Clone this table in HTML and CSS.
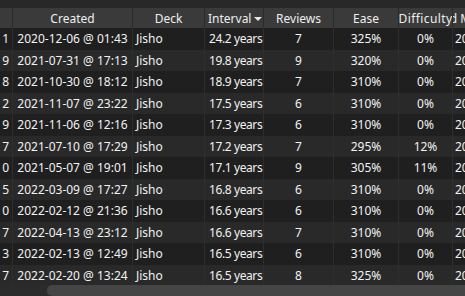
FILE: index.html
```html
<!DOCTYPE html>
<html>
<head>
<meta charset="utf-8">
<link rel="stylesheet" href="styles.css">
</head>
<body>
<div class="view">
  <div class="topstrip"></div>
  <div class="row head">
    <div class="c hc"></div>
    <div class="c hc"><span>Created</span></div>
    <div class="c hc"><span>Deck</span></div>
    <div class="c hc left"><span>Interval</span><i class="arrow"></i></div>
    <div class="c hc"><span>Reviews</span></div>
    <div class="c hc"><span>Ease</span></div>
    <div class="c hc"><span class="wide">Difficulty</span></div>
    <div class="c hc last"><span>Card Modified</span></div>
  </div>
  <div class="body" id="body"></div>
  <div class="hscroll"><div class="thumb"></div></div>
</div>
<script>
const data = [
  ["1","2020-12-06 @ 01:43","24.2 years","7","325%","0%"],
  ["9","2021-07-31 @ 17:13","19.8 years","9","320%","0%"],
  ["8","2021-10-30 @ 18:12","18.9 years","7","310%","0%"],
  ["2","2021-11-07 @ 23:22","17.5 years","6","310%","0%"],
  ["9","2021-11-06 @ 12:16","17.3 years","6","310%","0%"],
  ["7","2021-07-10 @ 17:29","17.2 years","7","295%","12%"],
  ["0","2021-05-07 @ 19:01","17.1 years","9","305%","11%"],
  ["5","2022-03-09 @ 17:27","16.8 years","6","310%","0%"],
  ["0","2022-02-12 @ 21:36","16.6 years","6","310%","0%"],
  ["7","2022-04-13 @ 23:12","16.6 years","7","310%","0%"],
  ["3","2022-02-13 @ 12:49","16.5 years","6","310%","0%"],
  ["7","2022-02-20 @ 13:24","16.5 years","8","325%","0%"]
];
const body = document.getElementById("body");
data.forEach((d, i) => {
  const r = document.createElement("div");
  r.className = "row " + (i % 2 ? "even" : "odd");
  r.innerHTML =
    '<div class="c right">' + d[0] + '</div>' +
    '<div class="c center">' + d[1] + '</div>' +
    '<div class="c">Jisho</div>' +
    '<div class="c ivl">' + d[2] + '</div>' +
    '<div class="c center">' + d[3] + '</div>' +
    '<div class="c center">' + d[4] + '</div>' +
    '<div class="c center">' + d[5] + '</div>' +
    '<div class="c last">2024-11-20</div>';
  body.appendChild(r);
});
</script>
</body>
</html>
```

FILE: styles.css
```css
html, body {
  margin: 0;
  padding: 0;
  background: #1f1f1f;
}
.view {
  width: 465px;
  height: 296px;
  overflow: hidden;
  display: flex;
  flex-direction: column;
  font-family: "Noto Sans", sans-serif;
  font-size: 12px;
  color: #f2f2f2;
}
.topstrip {
  height: 8px;
  background: #282828;
  flex: none;
}
.row {
  display: grid;
  grid-template-columns: 13px 120px 72px 59px 70px 65px 54px 36px;
  flex: none;
}
.head {
  height: 20px;
  background: #3a3a3a;
}
.body {
  height: 257px;
  overflow: hidden;
  flex: none;
}
.body .row {
  height: 21.5px;
}
.odd { background: #1f1f1f; }
.even { background: #292929; }
.c {
  display: flex;
  align-items: center;
  padding: 0 3px;
  white-space: nowrap;
  overflow: hidden;
  border-right: 1px solid #2e2e2e;
  min-width: 0;
}
.c.ivl { padding: 0 0 0 4px; letter-spacing: -0.4px; }
.c.last { border-right: none; padding-left: 2px; }
.head .c {
  border-right: 1px solid #2a2a2a;
  justify-content: center;
  padding: 0;
  color: #eeeeee;
}
.head .c.left {
  justify-content: flex-start;
  padding-left: 3px;
}
.head .c span { flex: none; }
.head .c span.wide { letter-spacing: 0.4px; }
.right { justify-content: flex-end; }
.center { justify-content: center; }
.arrow {
  width: 0;
  height: 0;
  border-left: 4px solid transparent;
  border-right: 4px solid transparent;
  border-top: 4px solid #e8e8e8;
  margin-left: 3px;
  margin-top: 1px;
}
.hscroll {
  height: 11px;
  background: #2b2b2b;
  flex: none;
  display: flex;
  padding-left: 47px;
}
.thumb {
  flex: 1;
  background: #454545;
  border-radius: 5px 0 0 5px;
}
```
